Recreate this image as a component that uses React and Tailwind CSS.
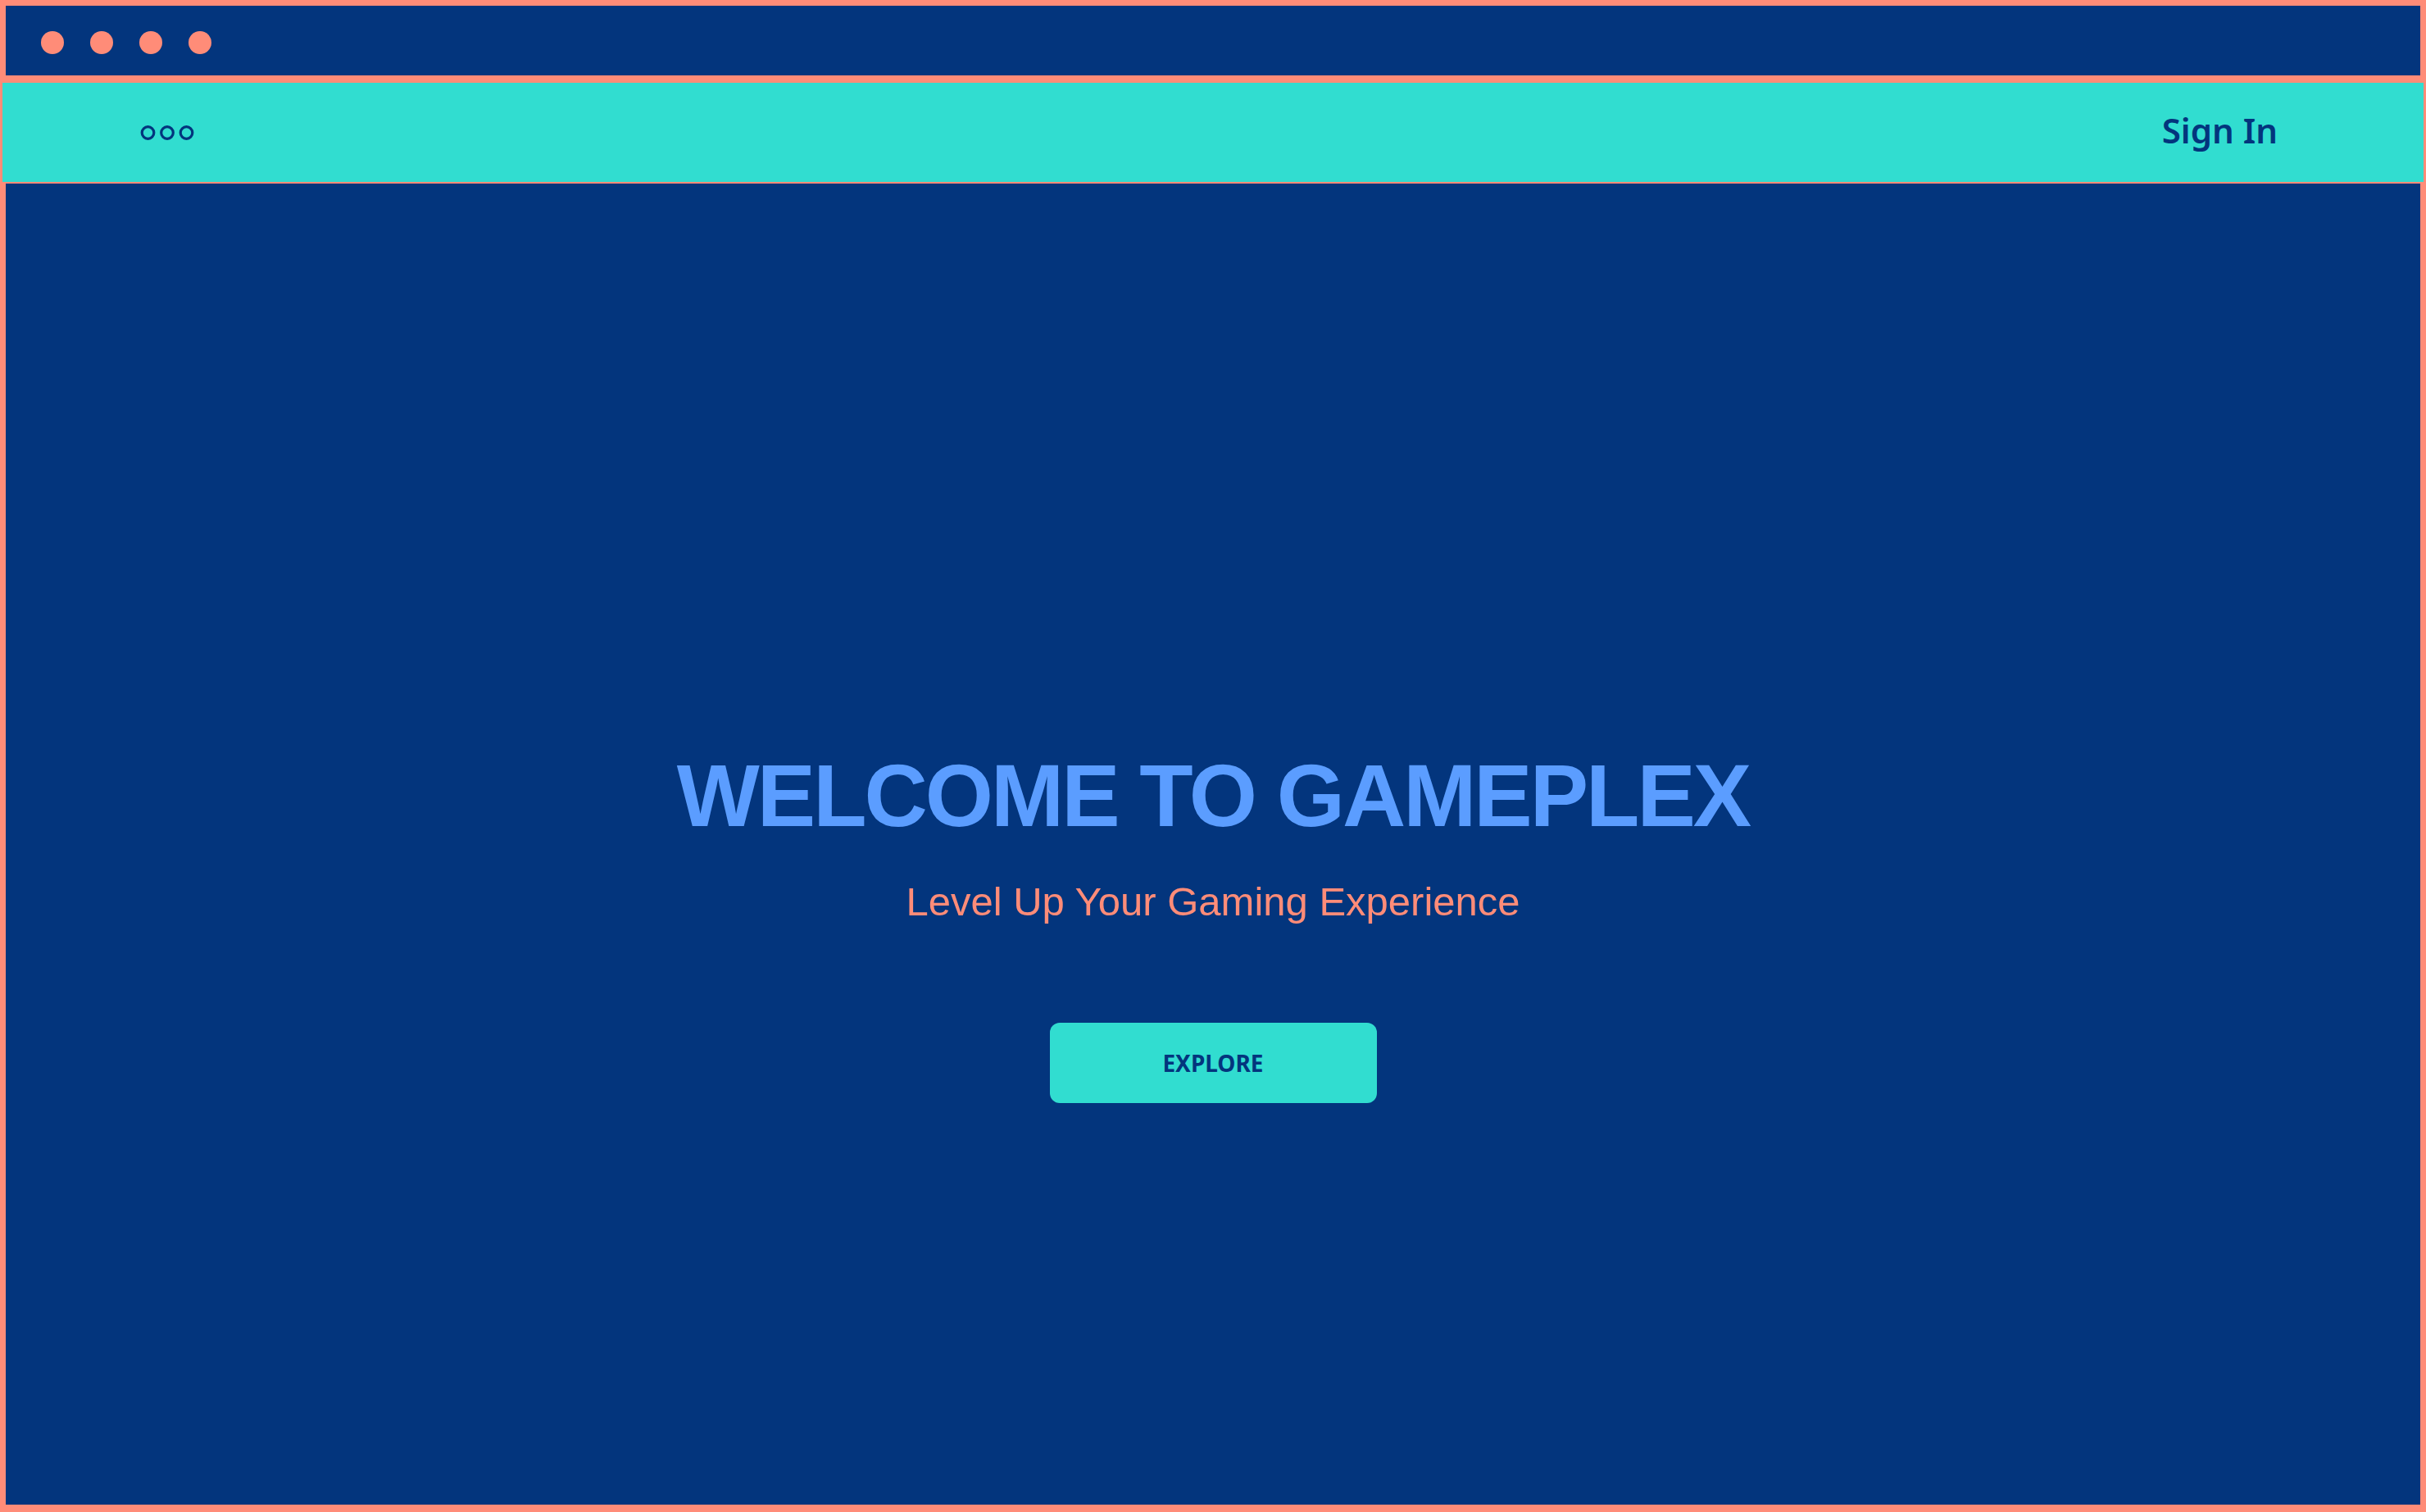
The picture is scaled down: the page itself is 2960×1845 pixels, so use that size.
import React from 'react';

const sans = { fontFamily: '"Liberation Sans", Arial, sans-serif' };
const noto = { fontFamily: '"Noto Sans", "Open Sans", sans-serif' };

function MenuDots() {
  return (
    <svg width="66" height="20" viewBox="0 0 66 20" fill="none">
      <circle cx="9.5" cy="10" r="7.3" stroke="#03357D" strokeWidth="3.2" />
      <circle cx="33" cy="10" r="7.3" stroke="#03357D" strokeWidth="3.2" />
      <circle cx="56.5" cy="10" r="7.3" stroke="#03357D" strokeWidth="3.2" />
    </svg>
  );
}

export default function App() {
  return (
    <div className="w-full h-screen overflow-hidden bg-[#FF8C78] flex flex-col px-[3px]">
      {/* window chrome */}
      <div className="mt-[7px] mx-[4px] h-[85px] shrink-0 bg-[#03357D] flex items-start gap-[32px] pt-[31px] pl-[43px]">
        <span className="w-[28px] h-[28px] rounded-full bg-[#FF8C78]" />
        <span className="w-[28px] h-[28px] rounded-full bg-[#FF8C78]" />
        <span className="w-[28px] h-[28px] rounded-full bg-[#FF8C78]" />
        <span className="w-[28px] h-[28px] rounded-full bg-[#FF8C78]" />
      </div>

      {/* nav */}
      <nav className="mt-[9px] h-[121px] shrink-0 bg-[#31DDD0] flex items-center justify-between pl-[168px] pr-[178px]">
        <button className="flex items-center">
          <MenuDots />
        </button>
        <a href="#" className="mb-[6px] text-[42px] font-semibold text-[#03357D] leading-none" style={noto}>
          Sign In
        </a>
      </nav>

      {/* hero */}
      <main className="mt-[2px] mb-[9px] mx-[4px] flex-1 bg-[#03357D] flex flex-col items-center pt-[694px]">
        <h1
          className="text-[107px] font-bold leading-none tracking-[-3px] text-[#5B9DFF] whitespace-nowrap"
          style={sans}
        >
          WELCOME TO GAMEPLEX
        </h1>
        <p className="mt-[51px] text-[49px] leading-none text-[#FF8C78] whitespace-nowrap" style={sans}>
          Level Up Your Gaming Experience
        </p>
        <button
          className="mt-[123px] w-[399px] h-[98px] rounded-[12px] bg-[#31DDD0] text-[28px] font-bold text-[#03357D] flex items-center justify-center"
          style={noto}
        >
          EXPLORE
        </button>
      </main>
    </div>
  );
}
